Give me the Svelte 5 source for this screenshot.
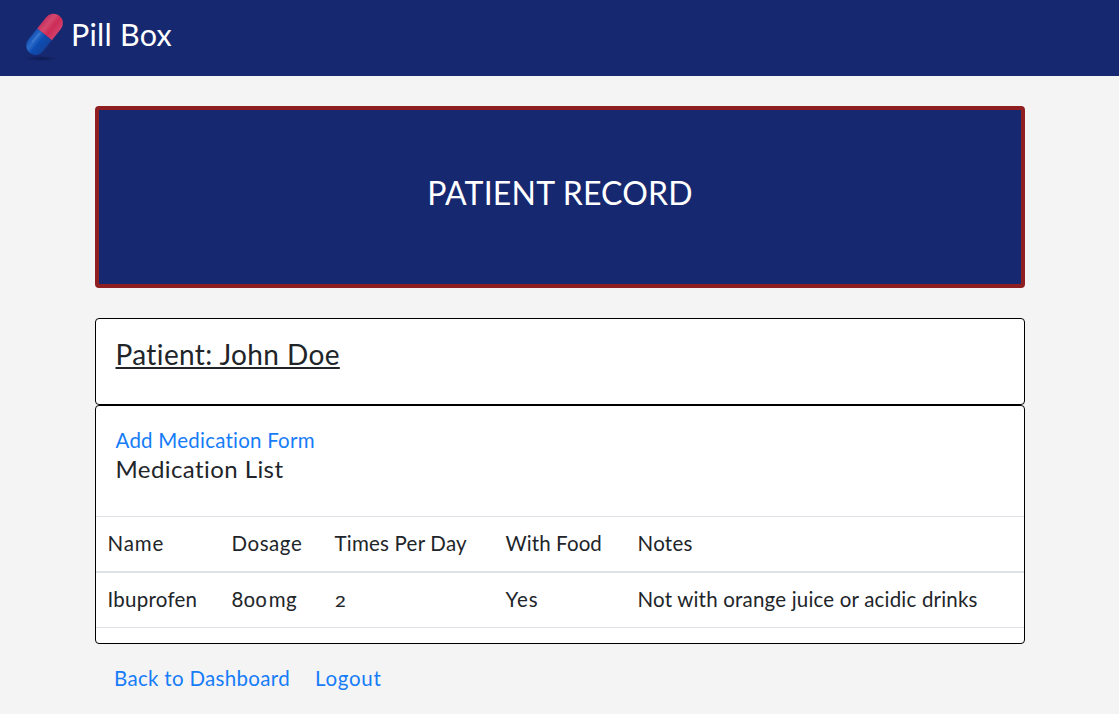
<script>
  const columns = [
    { label: 'Name', spacing: 0.9 },
    { label: 'Dosage', spacing: 0.55 },
    { label: 'Times Per Day', spacing: 0.22 },
    { label: 'With Food', spacing: 0.1 },
    { label: 'Notes', spacing: 0.3 }
  ];
</script>

<header>
  <svg class="pill" width="48" height="56" viewBox="0 0 48 56" aria-hidden="true">
    <defs>
      <linearGradient id="red" x1="0" y1="0" x2="1" y2="0">
        <stop offset="0" stop-color="#c43262" />
        <stop offset=".3" stop-color="#d5486e" />
        <stop offset=".6" stop-color="#cc2c57" />
        <stop offset="1" stop-color="#d4406c" />
      </linearGradient>
      <linearGradient id="blue" x1="0" y1="0" x2="1" y2="0">
        <stop offset="0" stop-color="#1550b2" />
        <stop offset=".28" stop-color="#2b6bc8" />
        <stop offset=".55" stop-color="#0d4db4" />
        <stop offset="1" stop-color="#14439c" />
      </linearGradient>
      <radialGradient id="shade">
        <stop offset="0" stop-color="#0c174b" stop-opacity=".8" />
        <stop offset="1" stop-color="#0c174b" stop-opacity="0" />
      </radialGradient>
    </defs>
    <ellipse cx="21" cy="50.5" rx="17" ry="2.8" fill="url(#shade)" />
    <g transform="translate(24.5 26.3) rotate(38.7)">
      <path d="M-9.4 0V-14.4A9.4 9.4 0 0 1 9.4 -14.4V0Z" fill="url(#red)" />
      <path d="M-9.4 0V14.4A9.4 9.4 0 0 0 9.4 14.4V0Z" fill="url(#blue)" />
      <path d="M-4.6 3V13" stroke="#78aaf0" stroke-opacity=".22" stroke-width="2" stroke-linecap="round" />
    </g>
  </svg>
  <span class="brand">Pill Box</span>
</header>

<main>
  <section class="banner"><h2>PATIENT RECORD</h2></section>
  <section class="card patient"><h3>Patient: John Doe</h3></section>
  <section class="card medications">
    <div class="intro">
      <a class="add" href="#add">Add Medication Form</a>
      <h4>Medication List</h4>
    </div>
    <table>
      <colgroup><col class="c1" /><col class="c2" /><col class="c3" /><col class="c4" /><col /></colgroup>
      <thead>
        <tr>
          {#each columns as column}
            <th style="letter-spacing: {column.spacing}px">{column.label}</th>
          {/each}
        </tr>
      </thead>
      <tbody>
        <tr>
          <td class="name">Ibuprofen</td>
          <td class="dose">8<span class="small zeros">00</span>mg</td>
          <td><span class="small">2</span></td>
          <td class="food">Yes</td>
          <td class="notes">Not with orange juice or acidic drinks</td>
        </tr>
      </tbody>
    </table>
  </section>
  <nav>
    <a class="back" href="#dashboard">Back to Dashboard</a>
    <a class="logout" href="#logout">Logout</a>
  </nav>
</main>

<style>
  :global(body) {
    background: #f4f4f4;
    color: #212529;
    font: 20.5px/30px Lato, sans-serif;
    font-variant-ligatures: none;
  }
  header {
    box-sizing: border-box;
    height: 76px;
    padding: 8px 20px;
    background: #16286f;
    display: flex;
    align-items: flex-start;
    gap: 3px;
  }
  .pill { flex: none; }
  .brand {
    color: #fff;
    font-size: 30.5px;
    line-height: 36px;
    padding-top: 8px;
    letter-spacing: 0.25px;
  }
  main {
    width: 930px;
    margin: 30px 0 0 95px;
  }
  h2, h3, h4 { margin: 0; font-weight: 400; }
  .banner {
    box-sizing: border-box;
    height: 182px;
    padding-top: 64px;
    border: 4px solid #8e1e20;
    border-radius: 4px;
    background: #16286f;
    color: #fff;
    text-align: center;
    margin-bottom: 30px;
  }
  h2 { font-size: 32px; line-height: 38px; letter-spacing: 0.2px; }
  .card {
    box-sizing: border-box;
    border: 1px solid #000;
    border-radius: 4px;
    background: #fff;
  }
  .patient { height: 87px; padding: 18px 19.5px; }
  h3 {
    font-size: 28px;
    line-height: 34px;
    letter-spacing: 0.38px;
    text-decoration: underline;
    text-decoration-thickness: 2px;
    text-underline-offset: 2px;
    text-decoration-skip-ink: none;
  }
  .medications { height: 239px; }
  .intro { box-sizing: border-box; height: 110px; padding: 19px 19.5px 0; }
  a { color: #167cf8; text-decoration: none; }
  .add { display: block; height: 29px; letter-spacing: 0.23px; }
  h4 { font-size: 24px; line-height: 29px; letter-spacing: 0.42px; }
  table {
    width: 928px;
    table-layout: fixed;
    border-spacing: 0;
    border-bottom: 1px solid #dee2e6;
  }
  .c1 { width: 124px; }
  .c2 { width: 103px; }
  .c3 { width: 171px; }
  .c4 { width: 132px; }
  th, td {
    height: 30px;
    padding: 11px 0 13px 11.5px;
    font-weight: 400;
    text-align: left;
    white-space: nowrap;
  }
  th { border-top: 1px solid #dee2e6; border-bottom: 2px solid #dee2e6; }
  .name { letter-spacing: 0.25px; }
  .food { letter-spacing: 0.9px; }
  .notes { letter-spacing: 0.19px; }
  .dose { letter-spacing: 0.4px; }
  .small {
    display: inline-block;
    font-size: 16px;
    line-height: 20px;
    -webkit-text-stroke: 0.2px currentColor;
    transform: scaleX(1.15);
    transform-origin: left;
  }
  .zeros { margin-right: 4.5px; letter-spacing: 0.9px; }
  nav { display: flex; padding: 19px 19px 0; gap: 25px; }
  .back { letter-spacing: 0.32px; }
  .logout { letter-spacing: 0.7px; }
</style>
